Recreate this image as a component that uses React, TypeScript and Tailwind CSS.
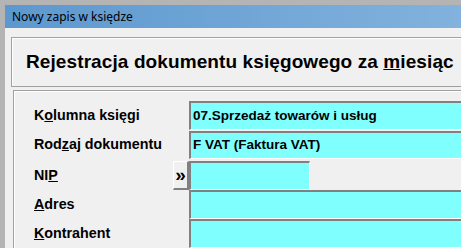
const rows = [
  { label: <><span>K</span><u>o</u><span>lumna księgi</span></>, value: '07.Sprzedaż towarów i usług', top: 'mt-[10px]', h: 'h-[29px]' },
  { label: <><span>Rod</span><u>z</u><span>aj dokumentu</span></>, value: 'F VAT (Faktura VAT)', top: 'mt-[1px]', h: 'h-[28px]' },
  { label: <><span>NI</span><u>P</u></>, value: '', nip: true, top: 'mt-[2px]', h: 'h-[29px]' },
  { label: <><u>A</u><span>dres</span></>, value: '', top: 'mt-0', h: 'h-[29px]' },
  { label: <><u>K</u><span>ontrahent</span></>, value: '', top: 'mt-0', h: 'h-[29px]' },
]

function Field({ value, className }: { value: string; className: string }) {
  return (
    <div
      className={`${className} h-full bg-[#80ffff] border-t-2 border-l-2 border-t-[#808080] border-l-[#808080] border-b border-r border-b-white border-r-white flex items-center pl-[2px] text-[13.5px] font-bold text-black whitespace-nowrap`}
    >
      {value}
    </div>
  )
}

export default function App() {
  return (
    <div className="w-[461px] h-[248px] overflow-hidden bg-[#b4b4b4] pt-[5px] pl-[5px] font-['Liberation_Sans',Arial,sans-serif]">
      <div className="h-[243px] bg-[#f0f0f0] overflow-hidden">
        <div className="h-[23px] bg-gradient-to-r from-[#5c98cf] to-[#82b2dd] flex items-center pl-[7px] text-[12px] text-black font-['Noto_Sans',sans-serif]">
          Nowy zapis w księdze
        </div>
        <div className="ml-[6px] mt-[9px] h-[50px] w-[460px] border border-r-0 border-[#a0a0a0] shadow-[inset_1px_1px_0_#ffffff] flex items-center pl-[14px]">
          <span className="text-[19px] font-bold text-black whitespace-nowrap tracking-[0.1px]">
            Rejestracja dokumentu księgowego za <u>m</u>iesiąc
          </span>
        </div>
        <div className="ml-[8px] mt-[3px] w-[460px] h-[200px] border-t border-l border-[#a0a0a0] shadow-[inset_1px_1px_0_#ffffff]">
          {rows.map((r, i) => (
            <div key={i} className={`${r.top} ${r.h} flex items-stretch`}>
              <div className="w-[159px] pl-[20px] flex items-center text-[14.3px] font-bold text-black whitespace-nowrap">
                {r.label}
              </div>
              <div className="w-[16px] flex">
                {r.nip && (
                  <div className="w-[16px] h-full bg-[#f0f0f0] border-t border-l border-white border-b-2 border-r-2 border-b-[#808080] border-r-[#808080] flex items-center justify-center text-[19px] font-bold text-black leading-none pb-[2px]">
                    »
                  </div>
                )}
              </div>
              <Field value={r.value} className={r.nip ? 'w-[121px]' : 'flex-1'} />
            </div>
          ))}
        </div>
      </div>
    </div>
  )
}
